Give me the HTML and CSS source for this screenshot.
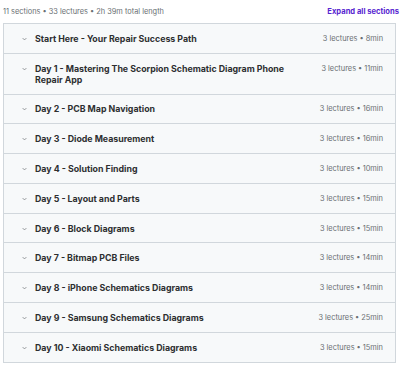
FILE: index.html
```html
<!DOCTYPE html>
<html lang="en">
<head>
    <meta charset="UTF-8">
    <meta name="viewport" content="width=device-width, initial-scale=1.0">
    <title>Course content</title>
    <link rel="stylesheet" href="styles.css">
</head>
<body>
    <div class="curriculum">
        <div class="summary">
            <span class="stats">11 sections • 33 lectures • 2h 39m total length</span>
            <button class="expand">Expand all sections</button>
        </div>

        <div class="sections">
            <div class="section">
                <svg class="chevron" viewBox="0 0 8 5"><path d="M1 1l3 3 3-3"/></svg>
                <span class="title">Start Here - Your Repair Success Path</span>
                <span class="meta">3 lectures • 8min</span>
            </div>
            <div class="section">
                <svg class="chevron" viewBox="0 0 8 5"><path d="M1 1l3 3 3-3"/></svg>
                <span class="title">Day 1 - Mastering The Scorpion Schematic Diagram Phone Repair App</span>
                <span class="meta">3 lectures • 11min</span>
            </div>
            <div class="section">
                <svg class="chevron" viewBox="0 0 8 5"><path d="M1 1l3 3 3-3"/></svg>
                <span class="title">Day 2 - PCB Map Navigation</span>
                <span class="meta">3 lectures • 16min</span>
            </div>
            <div class="section">
                <svg class="chevron" viewBox="0 0 8 5"><path d="M1 1l3 3 3-3"/></svg>
                <span class="title">Day 3 - Diode Measurement</span>
                <span class="meta">3 lectures • 16min</span>
            </div>
            <div class="section">
                <svg class="chevron" viewBox="0 0 8 5"><path d="M1 1l3 3 3-3"/></svg>
                <span class="title">Day 4 - Solution Finding</span>
                <span class="meta">3 lectures • 10min</span>
            </div>
            <div class="section">
                <svg class="chevron" viewBox="0 0 8 5"><path d="M1 1l3 3 3-3"/></svg>
                <span class="title">Day 5 - Layout and Parts</span>
                <span class="meta">3 lectures • 15min</span>
            </div>
            <div class="section">
                <svg class="chevron" viewBox="0 0 8 5"><path d="M1 1l3 3 3-3"/></svg>
                <span class="title">Day 6 - Block Diagrams</span>
                <span class="meta">3 lectures • 15min</span>
            </div>
            <div class="section">
                <svg class="chevron" viewBox="0 0 8 5"><path d="M1 1l3 3 3-3"/></svg>
                <span class="title">Day 7 - Bitmap PCB Files</span>
                <span class="meta">3 lectures • 14min</span>
            </div>
            <div class="section">
                <svg class="chevron" viewBox="0 0 8 5"><path d="M1 1l3 3 3-3"/></svg>
                <span class="title">Day 8 - iPhone Schematics Diagrams</span>
                <span class="meta">3 lectures • 14min</span>
            </div>
            <div class="section">
                <svg class="chevron" viewBox="0 0 8 5"><path d="M1 1l3 3 3-3"/></svg>
                <span class="title">Day 9 - Samsung Schematics Diagrams</span>
                <span class="meta">3 lectures • 25min</span>
            </div>
            <div class="section">
                <svg class="chevron" viewBox="0 0 8 5"><path d="M1 1l3 3 3-3"/></svg>
                <span class="title">Day 10 - Xiaomi Schematics Diagrams</span>
                <span class="meta">3 lectures • 15min</span>
            </div>
        </div>
    </div>
</body>
</html>
```
FILE: styles.css
```css
body {
    margin: 0;
    font-family: Inter, "Noto Sans", sans-serif;
    background-color: #fff;
    color: #2d2f31;
}

.curriculum {
    padding: 0 3px;
}

.summary {
    display: flex;
    justify-content: space-between;
    align-items: center;
    height: 23px;
}

.stats {
    font-size: 7.4px;
    color: #6a6f73;
}

.expand {
    border: none;
    background: none;
    padding: 0;
    margin-right: -2px;
    font-family: inherit;
    font-size: 7.6px;
    font-weight: 700;
    color: #5624d0;
    cursor: pointer;
}

.sections {
    border: 1px solid #d1d7dc;
    border-bottom: none;
    margin-right: 1px;
}

.section {
    display: flex;
    align-items: flex-start;
    padding: 8.9px 12px 8.9px 18px;
    line-height: 11px;
    background-color: #f7f9fa;
    border-bottom: 1px solid #d1d7dc;
}

.chevron {
    width: 5px;
    height: 4px;
    margin-top: 4px;
    flex-shrink: 0;
    fill: none;
    stroke: #6a6f73;
    stroke-width: 1.1;
}

.title {
    flex: 1;
    margin-left: 8px;
    margin-right: 34px;
    font-size: 8.8px;
    font-weight: 700;
    color: #2d2f31;
}

.meta {
    font-size: 7.4px;
    color: #6a6f73;
    white-space: nowrap;
}
```
